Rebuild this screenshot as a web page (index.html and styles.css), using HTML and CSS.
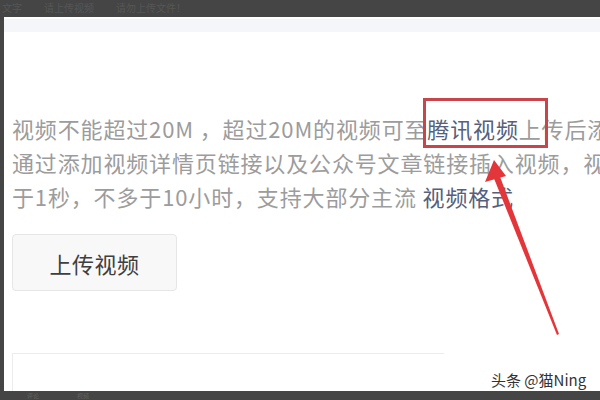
FILE: index.html
```html
<!DOCTYPE html>
<html lang="zh-CN">
<head>
    <meta charset="UTF-8">
    <meta name="viewport" content="width=device-width, initial-scale=1.0">
    <title>上传视频</title>
    <link rel="stylesheet" href="styles.css">
</head>
<body>
    <div class="topbar">
        <span class="ghost">文字</span>
        <span class="ghost">请上传视频</span>
        <span class="ghost">请勿上传文件！</span>
    </div>

    <div class="main">
        <div class="strip"></div>

        <p class="desc">视频不能超过20M ，超过20M的视频可至<a class="link">腾讯视频</a>上传后添加；<br>通过添加视频详情页链接以及公众号文章链接插入视频，视频时长不少<br>于1秒，不多于10小时，支持大部分主流 <a class="link">视频格式</a></p>

        <button class="upload-btn">上传视频</button>

        <div class="url-box"></div>

        <!-- annotation drawn over the screenshot -->
        <div class="mark-box"></div>
        <svg class="mark-arrow" viewBox="4 17 596 374" width="596" height="374">
            <polygon points="493,176 499,174 559,334 557,335" fill="#e2363a"/>
            <polygon points="494,160 485,182 506,176" fill="#e2363a"/>
        </svg>
        <div class="wm-patch"></div>
        <div class="watermark">头条 @猫Ning</div>
    </div>

    <div class="bottombar">
        <span class="ghost">评论</span>
        <span class="ghost">视频</span>
    </div>
</body>
</html>
```

FILE: styles.css
```css
body {
    margin: 0;
    width: 600px;
    height: 400px;
    overflow: hidden;
    background: #454545;
    font-family: "Noto Sans CJK SC", "Noto Sans", sans-serif;
}
.topbar {
    height: 17px;
    box-sizing: border-box;
    padding: 2px 0 0 2px;
    display: flex;
    align-items: flex-start;
    gap: 22px;
}
.topbar .ghost {
    color: #565656;
    font-size: 10px;
    line-height: 12px;
}
.main {
    position: relative;
    margin-left: 4px;
    height: 374px;
    background: #fff;
    padding-top: 2px;
    box-sizing: border-box;
    overflow: hidden;
}
.strip {
    height: 13px;
    background: #f4f6f9;
}
.desc {
    margin: 79px 0 0 8px;
    white-space: nowrap;
    font-size: 22px;
    line-height: 34px;
    color: #9c9c9c;
    letter-spacing: 0.85px;
}
.link {
    color: #56607a;
}
.upload-btn {
    display: block;
    margin: 21px 0 0 8px;
    width: 165px;
    height: 57px;
    background: #f8f8f8;
    border: 1px solid #e6e6e6;
    border-radius: 4px;
    font-family: inherit;
    font-size: 22px;
    letter-spacing: 0.5px;
    color: #3f3f3f;
}
.url-box {
    margin: 62px 0 0 8px;
    height: 60px;
    border: 1px solid #ececec;
    border-right: none;
}
.mark-box {
    position: absolute;
    left: 419px;
    top: 81px;
    width: 125px;
    height: 50px;
    border: 3px solid #c8454b;
    box-sizing: border-box;
}
.mark-arrow {
    position: absolute;
    left: 0;
    top: 0;
}
.wm-patch {
    position: absolute;
    left: 440px;
    top: 333px;
    width: 160px;
    height: 8px;
    background: #fff;
}
.watermark {
    position: absolute;
    left: 485px;
    top: 354px;
    font-size: 15px;
    line-height: 18px;
    color: #333;
    padding-left: 2px;
    text-shadow: 0 0 2px #fff;
}
.bottombar {
    height: 9px;
    box-sizing: border-box;
    padding: 1px 0 0 27px;
    display: flex;
    align-items: flex-start;
    gap: 38px;
}
.bottombar .ghost {
    color: #626262;
    font-size: 6px;
    line-height: 7px;
}
```
